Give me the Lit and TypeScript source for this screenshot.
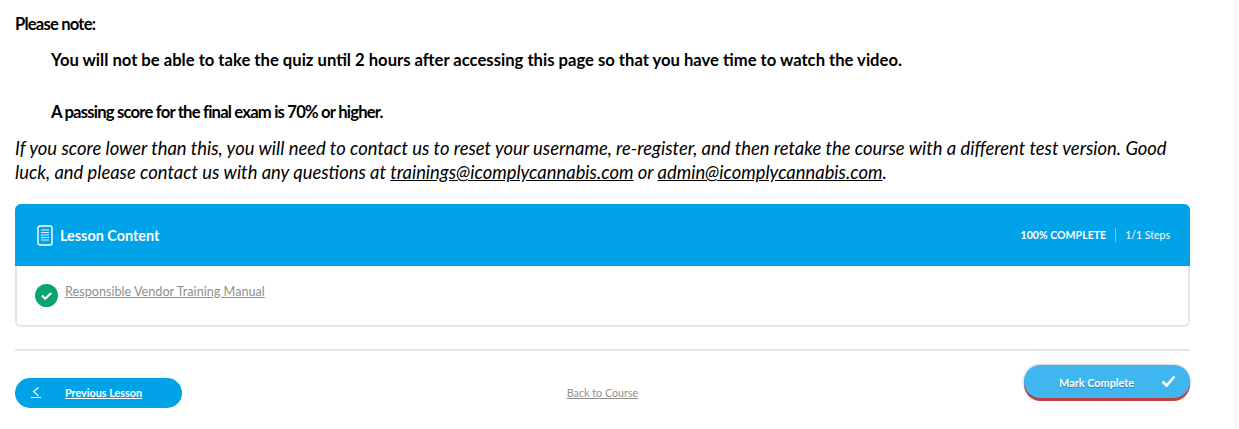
import { LitElement, html, css } from "lit";
import { customElement } from "lit/decorators.js";

@customElement("app-root")
export class AppRoot extends LitElement {
  static styles = css`
    :host { display: block; width: 1239px; height: 429px; overflow: hidden; background: #fff; font-family: Lato, sans-serif; color: #000; }
    .page { box-sizing: border-box; height: 429px; width: 1236px; border-right: 1px solid #eceef1; padding: 15px 45px 0 15px; }
    p { margin: 0; }
    .note { font-size: 16.6px; line-height: 18px; font-weight: 700; letter-spacing: -0.8px; }
    .indent { margin: 17px 0 0 36px; font-size: 16.64px; line-height: 20px; font-weight: 700; }
    .tight { margin-top: 32px; letter-spacing: -0.8px; }
    .italic { margin-top: 14px; font-size: 18.4px; line-height: 24px; font-style: italic; }
    .italic a { color: inherit; text-decoration: underline; }
    .card { margin-top: 20px; border-radius: 6px; border: 2px solid #e2e6ec; border-top: 0; height: 123px; box-sizing: border-box; }
    .head { margin: 0 -2px 0 -2px; height: 62px; background: #00a2e8; border-radius: 6px 6px 0 0; color: #fff; display: flex; align-items: center; padding: 0 20px 0 22px; }
    .head svg { display: block; margin-right: 7px; }
    .title { font-size: 14.4px; font-weight: 700; flex: 1; }
    .pct { font-size: 10.6px; font-weight: 700; }
    .steps { font-size: 10.5px; margin-left: 9px; padding-left: 9px; border-left: 1px solid rgba(255,255,255,.45); line-height: 14px; }
    .row { display: flex; padding: 18px 0 0 18px; }
    .row svg { display: block; margin-top: 0; }
    .row a { margin: 0 0 0 7px; font-size: 12.65px; line-height: 16px; color: #8f8f8f; text-decoration: underline; }
    hr { margin: 22px 0 0; border: 0; height: 2px; background: #e2e6ec; }
    .nav { display: grid; grid-template-columns: 1fr auto 1fr; margin-top: 14px; align-items: start; }
    .prev { justify-self: start; margin-top: 13px; width: 167px; height: 30px; box-sizing: border-box; border-radius: 15px; background: #00a2e8; color: #fff; display: flex; align-items: center; padding: 0 0 1px 16px; font-size: 10.8px; font-weight: 700; }
    .prev svg { display: block; margin-right: 24px; }
    .prev span { text-decoration: underline; }
    .back { margin-top: 20px; font-size: 10.75px; line-height: 16px; color: #8f8f8f; text-decoration: underline; }
    .done { justify-self: end; width: 166px; height: 33px; box-sizing: border-box; border-radius: 17px; background: #3fb6ef; color: #fff; box-shadow: 0 3px 0 #c0403f, 0 0 3px rgba(0,0,0,.35); display: flex; align-items: center; padding: 2px 14px 0 35px; font-size: 10.9px; font-weight: 700; text-shadow: 0 1px 1px rgba(0,0,0,.3); }
    .done span { flex: 1; }
    .done svg { display: block; margin-top: -3px; }
  `;

  render() {
    return html`
      <div class="page">
        <p class="note">Please note:</p>
        <p class="indent">You will not be able to take the quiz until 2 hours after accessing this page so that you have time to watch the video.</p>
        <p class="indent tight">A passing score for the final exam is 70% or higher.</p>
        <p class="italic">If you score lower than this, you will need to contact us to reset your username, re-register, and then retake the course with a different test version. Good luck, and please contact us with any questions at <a href="#">trainings@icomplycannabis.com</a> or <a href="#">admin@icomplycannabis.com</a>.</p>
        <div class="card">
          <div class="head">
            <svg width="16" height="21" viewBox="0 0 16 21" fill="none" stroke="#fff">
              <rect x="1" y="1" width="14" height="19" rx="2" stroke-width="1.4"/>
              <path d="M4 5h8M4 7.5h8M4 10h8M4 12.5h8M4 15h8" stroke-width="1" opacity=".85"/>
            </svg>
            <span class="title">Lesson Content</span>
            <span class="pct">100% COMPLETE</span>
            <span class="steps">1/1 Steps</span>
          </div>
          <div class="row">
            <svg width="23" height="23" viewBox="0 0 23 23"><circle cx="11.5" cy="11.5" r="11.5" fill="#0aa374"/><path d="M7 11.5l3.2 3.2 6-5.7" fill="none" stroke="#fff" stroke-width="2.2"/></svg>
            <a href="#">Responsible Vendor Training Manual</a>
          </div>
        </div>
        <hr />
        <div class="nav">
          <div class="prev">
            <svg width="10" height="11" viewBox="0 0 10 11" fill="none" stroke="#fff" stroke-width="1.2"><path d="M7.5 .5L2.5 4.6l5 4.1M0 10.5h10" /></svg>
            <span>Previous Lesson</span>
          </div>
          <a class="back" href="#">Back to Course</a>
          <div class="done">
            <span>Mark Complete</span>
            <svg width="15" height="12" viewBox="0 0 15 12" fill="none" stroke="#fff" stroke-width="2.6"><path d="M1.5 6.5l4 4L13.5 1.5"/></svg>
          </div>
        </div>
      </div>
    `;
  }
}
